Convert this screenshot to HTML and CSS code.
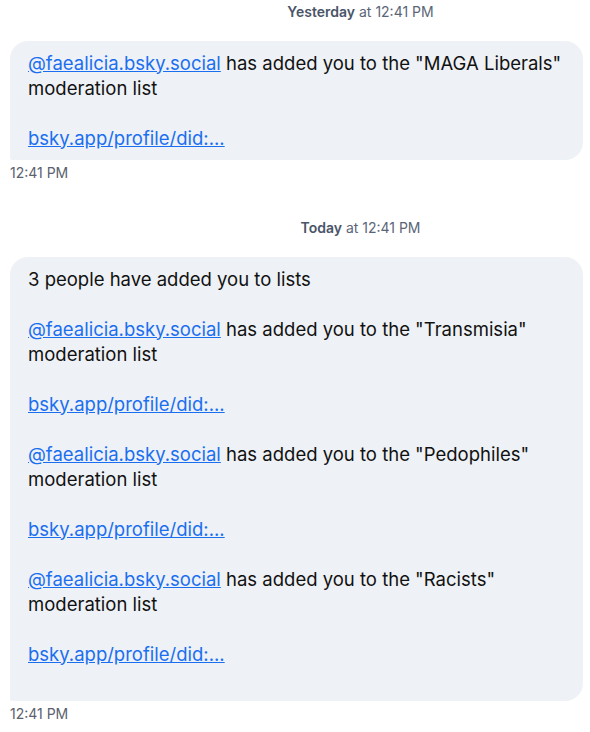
FILE: index.html
```html
<!DOCTYPE html>
<html>
<head>
<meta charset="utf-8">
<link rel="stylesheet" href="styles.css">
</head>
<body>
<div class="thread">
  <div class="day"><b>Yesterday</b> at 12:41 PM</div>
  <div class="bubble">
    <p><a href="#">@faealicia.bsky.social</a> has added you to the "MAGA Liberals" moderation list</p>
    <p><a href="#">bsky.app/profile/did:...</a></p>
  </div>
  <div class="time">12:41 PM</div>

  <div class="day day-gap"><b>Today</b> at 12:41 PM</div>
  <div class="bubble">
    <p>3 people have added you to lists</p>
    <p><a href="#">@faealicia.bsky.social</a> has added you to the "Transmisia" moderation list</p>
    <p><a href="#">bsky.app/profile/did:...</a></p>
    <p><a href="#">@faealicia.bsky.social</a> has added you to the "Pedophiles" moderation list</p>
    <p><a href="#">bsky.app/profile/did:...</a></p>
    <p><a href="#">@faealicia.bsky.social</a> has added you to the "Racists" moderation list</p>
    <p class="trail"><a href="#">bsky.app/profile/did:...</a></p>
  </div>
  <div class="time">12:41 PM</div>
</div>
</body>
</html>
```

FILE: styles.css
```css
html, body {
  margin: 0;
  padding: 0;
  background: #ffffff;
}

body {
  font-family: Inter, "Noto Sans", "Liberation Sans", sans-serif;
}

.thread {
  display: flex;
  flex-direction: column;
  padding: 3px 7px 0 10px;
}

.day {
  font-size: 14px;
  line-height: 18px;
  color: #5b6578;
  text-align: center;
  padding-left: 128px;
  margin-bottom: 20px;
}

.day b {
  font-weight: 600;
  color: #4a5568;
}

.day-gap {
  margin-top: 38px;
}

.bubble {
  background: #eef1f6;
  border-radius: 18px 18px 18px 2px;
  padding: 9.5px 18px;
  font-size: 18.5px;
  line-height: 25px;
  color: #111111;
}

.bubble p {
  margin: 0 0 25px 0;
}

.bubble p:last-child {
  margin-bottom: 0;
}

.bubble p.trail {
  margin-bottom: 25px;
}

.bubble a {
  color: #1a6ff0;
  text-decoration: underline;
}

.time {
  margin-top: 5px;
  font-size: 14px;
  line-height: 16px;
  color: #5b616e;
}
```
